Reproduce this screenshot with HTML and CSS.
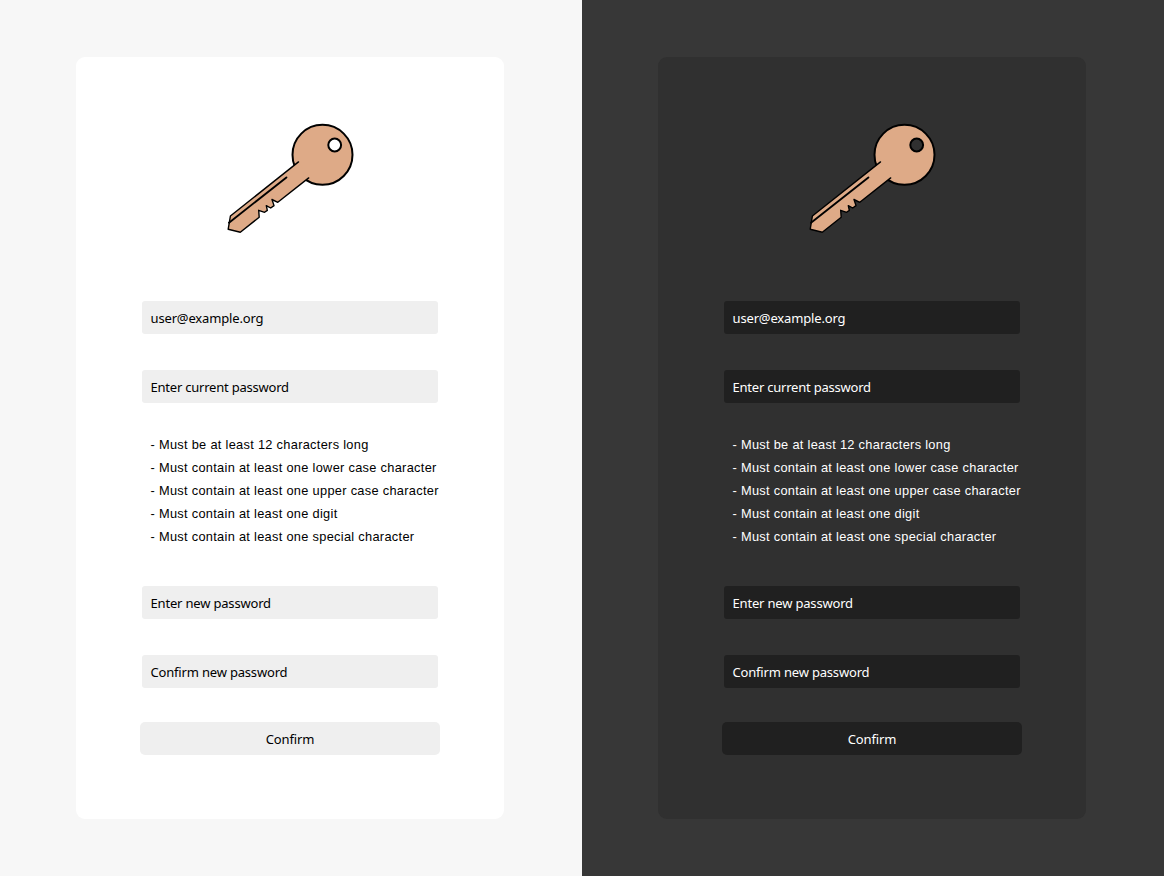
FILE: index.html
```
<!DOCTYPE html>
<html lang="en">
<head>
<meta charset="utf-8">
<title>Change password</title>
<link rel="stylesheet" href="styles.css">
</head>
<body>
<main class="themes">
  <section class="theme light">
    <form class="card">
      <svg class="key" viewBox="0 0 140 125" aria-hidden="true">
        <circle class="bow" cx="102.5" cy="39.8" r="30"/>
        <path class="blade" d="M78.5 46.9 10.4 101 8.2 114.2 20.3 117.3 39.2 102.2 38.7 95.3 44.6 97.3 47.3 95.4 46.3 90.7 50.7 93 54 90.6 52 84.5 57.8 87.3 88.7 62.9"/>
        <path class="groove" d="M9 107.7 66.4 62.4"/>
        <circle class="hole" cx="114.7" cy="30" r="6.4"/>
      </svg>
      <div class="field email">user@example.org</div>
      <div class="field current">Enter current password</div>
      <ul class="rules">
        <li>- Must be at least 12 characters long</li>
        <li>- Must contain at least one lower case character</li>
        <li>- Must contain at least one upper case character</li>
        <li>- Must contain at least one digit</li>
        <li>- Must contain at least one special character</li>
      </ul>
      <div class="field">Enter new password</div>
      <div class="field">Confirm new password</div>
      <button class="confirm" type="button">Confirm</button>
    </form>
  </section>
  <section class="theme dark">
    <form class="card">
      <svg class="key" viewBox="0 0 140 125" aria-hidden="true">
        <circle class="bow" cx="102.5" cy="39.8" r="30"/>
        <path class="blade" d="M78.5 46.9 10.4 101 8.2 114.2 20.3 117.3 39.2 102.2 38.7 95.3 44.6 97.3 47.3 95.4 46.3 90.7 50.7 93 54 90.6 52 84.5 57.8 87.3 88.7 62.9"/>
        <path class="groove" d="M9 107.7 66.4 62.4"/>
        <circle class="hole" cx="114.7" cy="30" r="6.4"/>
      </svg>
      <div class="field email">user@example.org</div>
      <div class="field current">Enter current password</div>
      <ul class="rules">
        <li>- Must be at least 12 characters long</li>
        <li>- Must contain at least one lower case character</li>
        <li>- Must contain at least one upper case character</li>
        <li>- Must contain at least one digit</li>
        <li>- Must contain at least one special character</li>
      </ul>
      <div class="field">Enter new password</div>
      <div class="field">Confirm new password</div>
      <button class="confirm" type="button">Confirm</button>
    </form>
  </section>
</main>
</body>
</html>
```
FILE: styles.css
```
* { box-sizing: border-box; }
body { margin: 0; }
.themes { display: grid; grid-template-columns: 1fr 1fr; height: 876px; }
.theme { background: var(--page); color: var(--text); padding: 57px 78px 57px 76px; }
.light { --page: #f7f7f7; --card: #fff; --field: #efefef; --text: #000; --hole: #fff; }
.dark { --page: #373737; --card: #303030; --field: #202020; --text: #fff; --hole: #303030; }
.card {
  width: 428px;
  height: 762px;
  padding: 58px 64px 0;
  border-radius: 9px;
  background: var(--card);
  display: flex;
  flex-direction: column;
}
.key { display: block; width: 140px; height: 125px; margin-left: 80px; flex: none; }
.bow, .blade, .hole { stroke: #000; }
.bow, .blade { fill: #deaa87; }
.bow, .hole { stroke-width: 2; }
.blade { stroke-width: 1.4; stroke-linecap: round; stroke-linejoin: round; }
.groove { fill: none; stroke: #000; stroke-width: 1.9; stroke-linecap: round; }
.hole { fill: var(--hole); }
.field {
  flex: none;
  height: 33px;
  margin: 0 2px 36px;
  padding: 0 8.5px;
  border-radius: 3px;
  background: var(--field);
  font: 13px/34px "Noto Sans", sans-serif;
  letter-spacing: -0.18px;
  white-space: nowrap;
}
.email { margin-top: 61px; letter-spacing: -0.15px; }
.current { letter-spacing: -0.22px; }
.rules {
  flex: none;
  list-style: none;
  margin: -6px 0 38px;
  padding: 0 0 0 10.5px;
  font: 12.8px/23px "Liberation Sans", Arial, sans-serif;
  letter-spacing: 0.3px;
  white-space: nowrap;
}
.confirm {
  flex: none;
  width: 300px;
  height: 33px;
  margin-top: -2px;
  padding: 1px 0 0;
  border: 0;
  border-radius: 5px;
  background: var(--field);
  color: var(--text);
  font: 13px/32px "Noto Sans", sans-serif;
  letter-spacing: -0.15px;
}
```
